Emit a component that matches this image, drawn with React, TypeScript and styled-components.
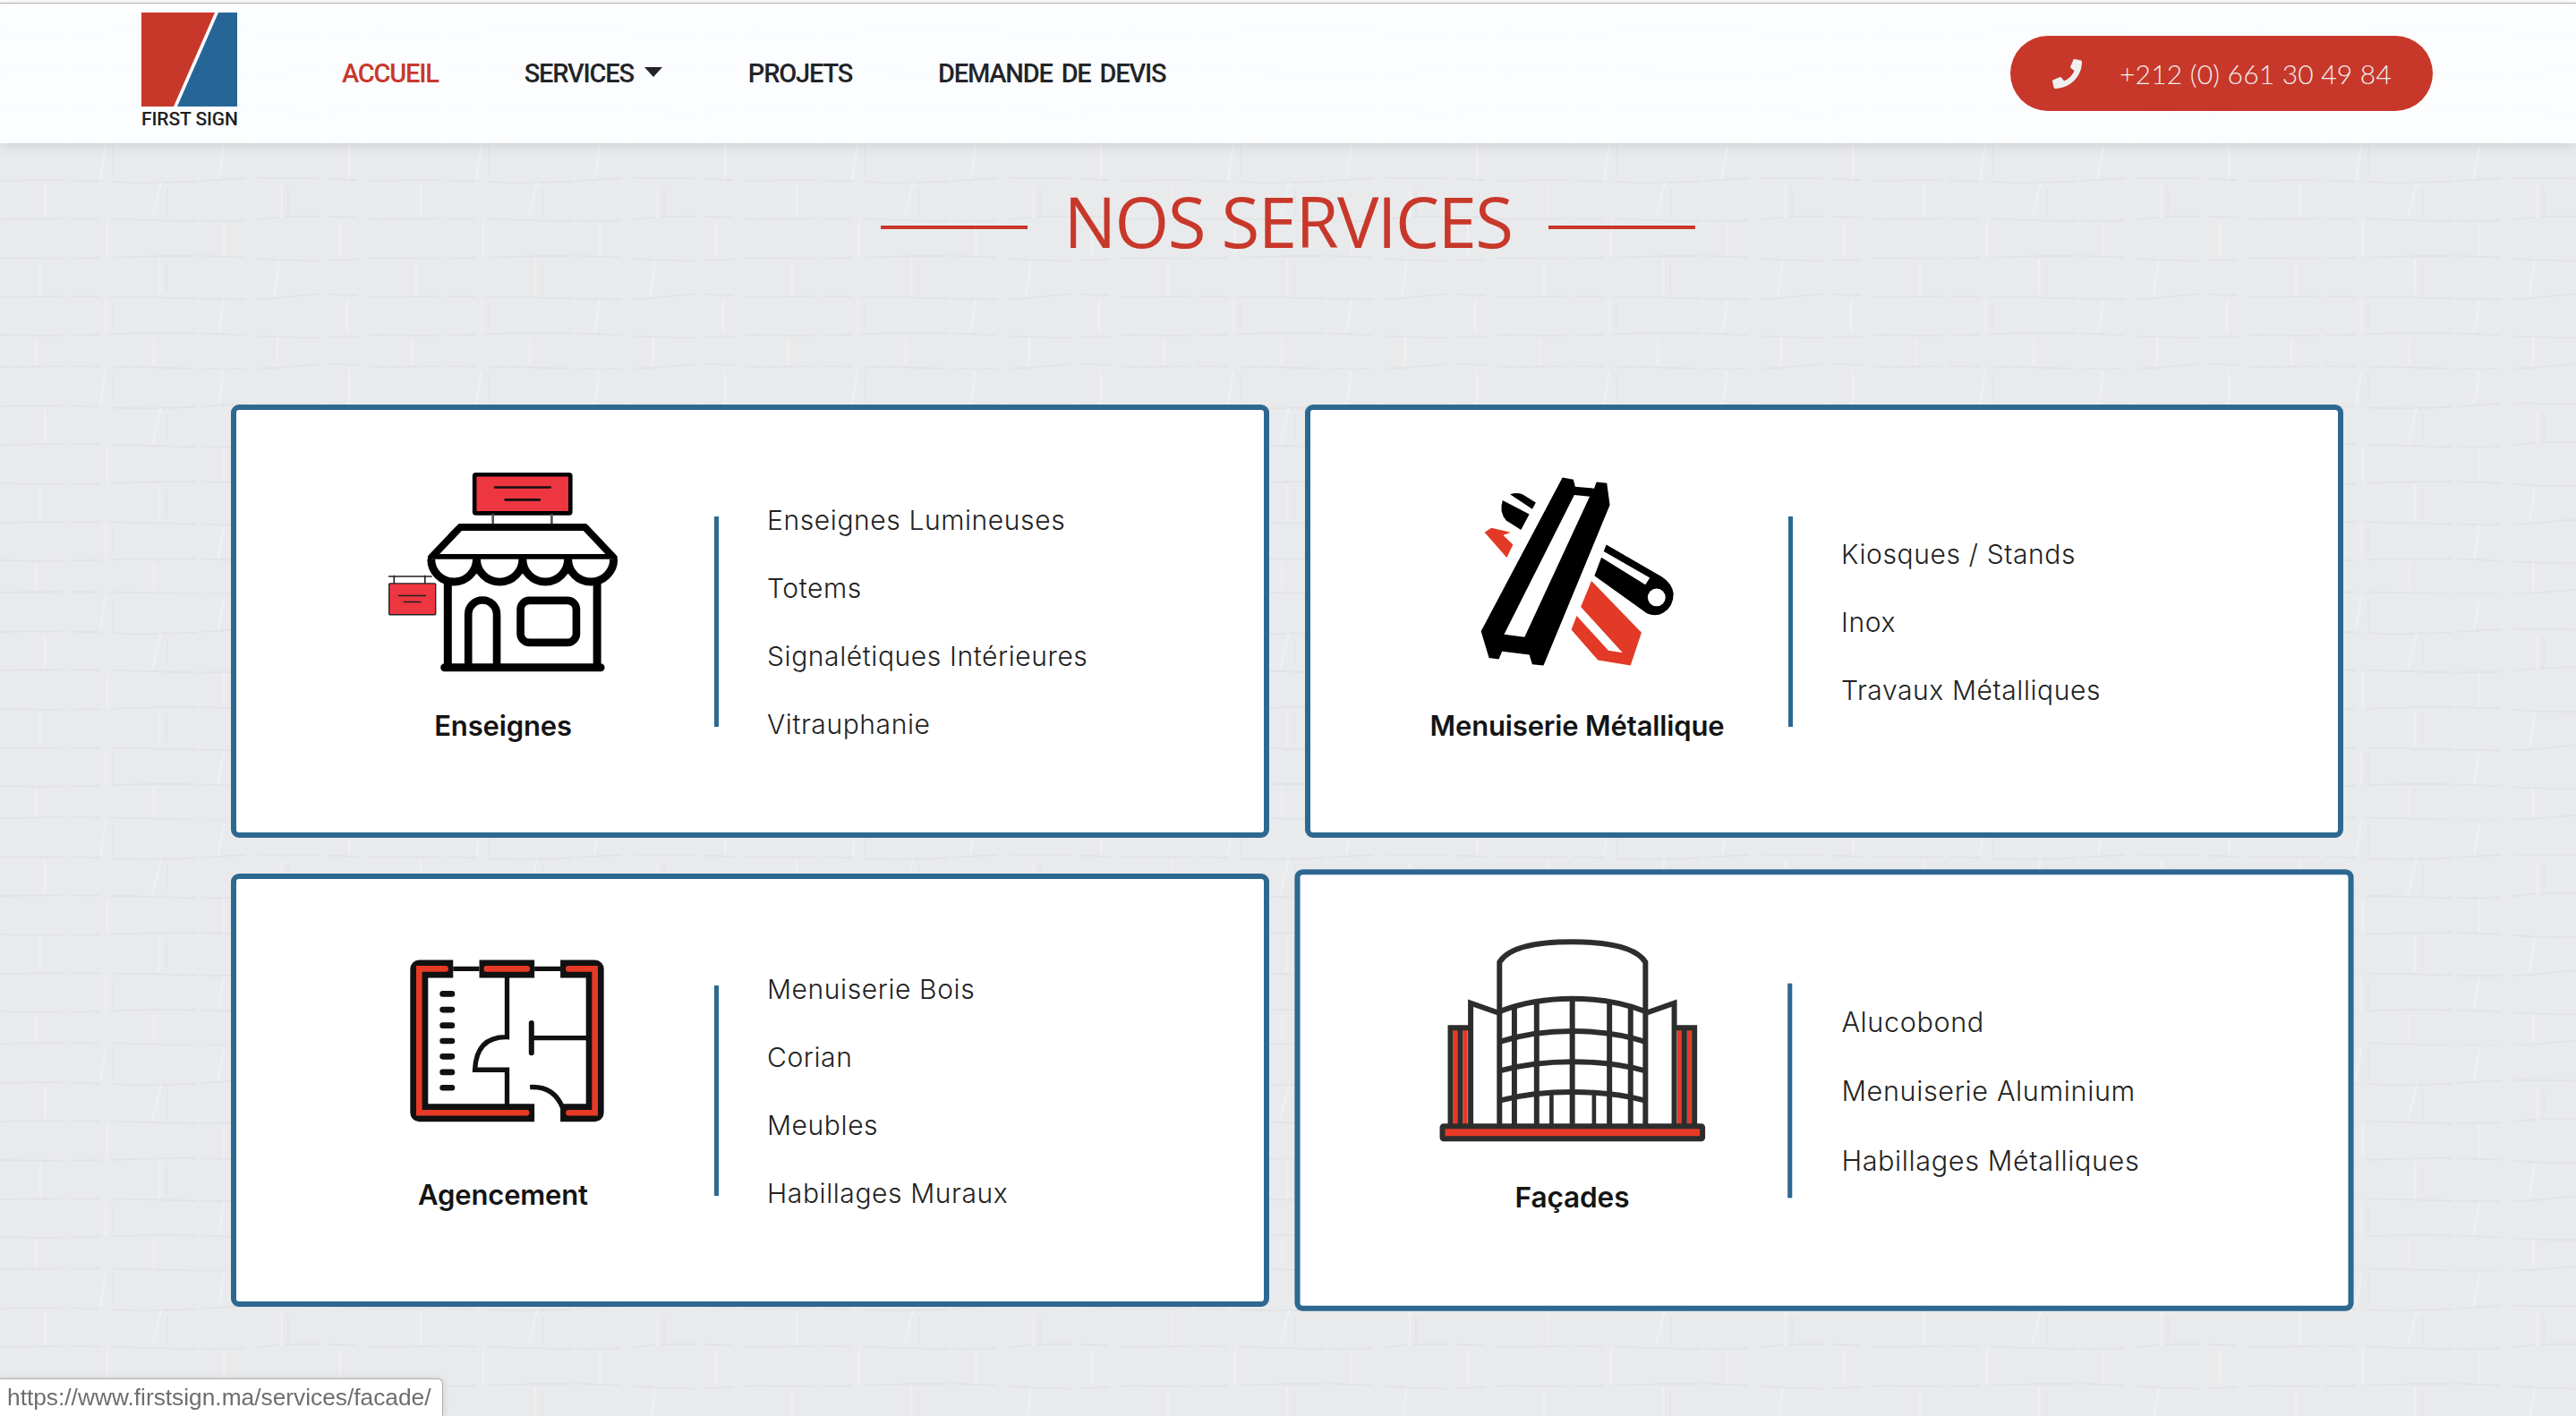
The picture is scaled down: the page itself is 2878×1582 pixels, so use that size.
import React from "react";
import styled, { createGlobalStyle } from "styled-components";
import { FaPhone } from "react-icons/fa";

const brickTile = encodeURIComponent(`<svg xmlns="http://www.w3.org/2000/svg" width="420" height="252" viewBox="0 0 420 252"><defs><filter id="b"><feGaussianBlur stdDeviation="0.7"/></filter></defs><g fill="none" filter="url(#b)"><g stroke="#e2e3e5" stroke-width="2" stroke-dasharray="70 8 34 12 96 6 48 14"><path d="M0 42 Q60 40 120 43 T240 41 T420 42"/><path d="M0 85 Q80 83 170 86 T300 84 T420 85"/><path d="M0 128 Q70 130 150 127 T290 129 T420 128"/><path d="M0 172 Q100 170 200 173 T330 171 T420 172"/><path d="M0 214 Q60 216 130 213 T280 215 T420 214"/><path d="M0 250 Q90 248 190 251 T330 249 T420 250"/></g><g stroke="#eeeff0" stroke-width="3"><path d="M118 2 L112 40"/><path d="M250 4 L244 40"/><path d="M390 2 V40"/><path d="M50 45 V83"/><path d="M180 44 L170 84"/><path d="M315 46 V84"/><path d="M120 88 V126"/><path d="M250 88 V126"/><path d="M380 88 V126"/><path d="M45 131 V170"/><path d="M178 130 V170"/><path d="M312 132 L306 170"/><path d="M118 175 V212"/><path d="M250 175 L244 212"/><path d="M388 175 V212"/><path d="M40 217 V248"/><path d="M172 217 V248"/><path d="M310 217 V248"/></g><g stroke="#e4e5e7" stroke-width="2"><path d="M126 4 V38"/><path d="M187 50 V80"/><path d="M322 50 V82"/><path d="M186 135 V166"/><path d="M126 180 V208"/></g></g></svg>`);

const GlobalStyle = createGlobalStyle`
  html, body { margin: 0; padding: 0; height: 100%; }
  body {
    overflow: hidden;
    background-color: #e9eaec;
    background-image: url("data:image/svg+xml,${brickTile}");
    background-position: 0 160px;
    font-family: "Inter", "Noto Sans", sans-serif;
  }
  * { box-sizing: border-box; }
`;

const Page = styled.div`
  width: 2878px;
  height: 1582px;
  display: flex;
  flex-direction: column;
`;

const TopStrip = styled.div`
  height: 4px;
  background: #fcfdff;
  border-bottom: 1px solid #b5b5b5;
`;

const Header = styled.header`
  height: 156px;
  padding: 10px 160px 0 158px;
  display: flex;
  align-items: flex-start;
  justify-content: space-between;
  background: rgba(252, 253, 255, 0.97);
  box-shadow: 0 2px 14px rgba(0, 0, 0, 0.12);
  position: relative;
`;

const Left = styled.div`
  display: flex;
  align-items: flex-start;
`;

const Logo = styled.a`
  display: flex;
  flex-direction: column;
  width: 107px;
`;

const LogoMark = styled.svg`
  width: 107px;
  height: 105px;
  display: block;
`;

const LogoText = styled.span`
  font-family: "Roboto", sans-serif;
  font-weight: 500;
  font-size: 21px;
  line-height: 22px;
  margin-top: 3px;
  color: #1f1f1f;
  white-space: nowrap;
  letter-spacing: -0.1px;
`;

const Nav = styled.nav`
  display: flex;
  align-items: center;
  gap: 96px;
  margin-left: 117px;
  height: 136px;
`;

const NavItem = styled.a<{ $active?: boolean }>`
  display: flex;
  align-items: center;
  gap: 12px;
  font-family: "Roboto", sans-serif;
  font-weight: 500;
  font-size: 29px;
  line-height: 36px;
  letter-spacing: -1.2px;
  word-spacing: 4px;
  color: ${(p) => (p.$active ? "#c8382a" : "#222428")};
  white-space: nowrap;
`;

const Caret = styled.span`
  width: 0;
  height: 0;
  margin-bottom: 3px;
  border-left: 10px solid transparent;
  border-right: 10px solid transparent;
  border-top: 11px solid #222428;
`;

const PhoneButton = styled.a`
  margin-top: 26px;
  width: 472px;
  height: 84px;
  border-radius: 42px;
  background: #c8382a;
  color: #f0f0f0;
  display: flex;
  align-items: center;
  padding-left: 47px;
  gap: 42px;
  font-family: "Lato", sans-serif;
  font-weight: 300;
  font-size: 30px;
  letter-spacing: 0.2px;
  white-space: nowrap;
`;

const PhoneIcon = styled(FaPhone)`
  width: 33px;
  height: 33px;
  flex: none;
`;

const Main = styled.main`
  padding: 38px 0 0 258px;
`;

const TitleRow = styled.div`
  display: flex;
  justify-content: center;
  align-items: center;
  gap: 40px;
  width: 2362px;
  height: 100px;
  margin-bottom: 154px;
`;

const TitleRule = styled.span`
  width: 164px;
  height: 4px;
  background: #c8382a;
  margin-top: 12px;
`;

const Title = styled.h1`
  margin: -2px 0 0;
  font-family: "Open Sans", sans-serif;
  font-weight: 400;
  font-size: 78px;
  line-height: 100px;
  letter-spacing: -1.6px;
  color: #c8382a;
  white-space: nowrap;
`;

const Grid = styled.div`
  display: grid;
  grid-template-columns: 1160px 1160px;
  grid-auto-rows: 484px;
  column-gap: 40px;
  row-gap: 40px;
`;

const Card = styled.article<{ $hover?: boolean }>`
  background: #fff;
  border: 6px solid #2d6891;
  border-radius: 9px;
  display: flex;
  align-items: center;
  transform: ${(p) => (p.$hover ? "scale(1.02)" : "none")};
`;

const Feature = styled.div`
  width: 534px;
  padding-left: 62px;
  margin-bottom: 36px;
  display: flex;
  flex-direction: column;
  align-items: center;
  flex: none;
`;

const IconBox = styled.div`
  height: 236px;
  display: flex;
  align-items: center;
  justify-content: center;
`;

const FeatureName = styled.h2`
  margin: 34px 0 0;
  font-family: "Inter", sans-serif;
  font-weight: 600;
  font-size: 31px;
  line-height: 40px;
  letter-spacing: -0.15px;
  color: #141414;
  white-space: nowrap;
`;

const Divider = styled.span`
  width: 5px;
  height: 235px;
  background: #2d6891;
  flex: none;
`;

const Items = styled.ul`
  list-style: none;
  margin: 0;
  padding: 2px 0 0 54px;
  display: flex;
  flex-direction: column;
  gap: 36px;
`;

const Item = styled.li`
  font-family: "Inter", sans-serif;
  font-weight: 300;
  font-size: 30px;
  line-height: 40px;
  letter-spacing: 0.6px;
  color: #222;
  white-space: nowrap;
`;

const StatusBar = styled.div`
  position: fixed;
  left: 0;
  bottom: 0;
  width: 495px;
  height: 42px;
  padding-left: 8px;
  display: flex;
  align-items: center;
  background: #fff;
  border: 1px solid #adadad;
  border-left: 0;
  border-bottom: 0;
  border-top-right-radius: 6px;
  box-shadow: 0 0 8px rgba(0, 0, 0, 0.12);
  font-family: "Liberation Sans", sans-serif;
  font-size: 26.3px;
  color: #6e6e6e;
  white-space: nowrap;
`;

const ShopIcon = () => (
  <svg width={258} height={224} viewBox="100 76 778 674" aria-hidden="true">
    <rect x="393" y="85" width="323" height="130" rx="4" fill="#ee3640" stroke="#000" strokeWidth="14" />
    <path d="M462 128H648M497 170H612" stroke="#111" strokeWidth="8" strokeLinecap="round" />
    <path d="M455 218V255M653 218V255" stroke="#555" strokeWidth="8" />
    <path d="M345 262H765L862 365H247Z" fill="#fff" stroke="#000" strokeWidth="24" strokeLinejoin="round" />
    <path d="M303 450V735M806 450V735M292 735H818" fill="none" stroke="#000" strokeWidth="27" strokeLinecap="round" />
    <path d="M247 370A76.5 76 0 0 0 400 370A77 76 0 0 0 555 370A76.5 76 0 0 0 708 370A77 76 0 0 0 862 370" fill="#fff" stroke="#000" strokeWidth="27" strokeLinejoin="round" />
    <path d="M372 725V556A48 48 0 0 1 468 556V725" fill="none" stroke="#000" strokeWidth="26" />
    <rect x="548" y="509" width="188" height="142" rx="30" fill="none" stroke="#000" strokeWidth="26" />
    <path d="M103 428H250M122 424V452M226 424V452" stroke="#222" strokeWidth="5" />
    <rect x="105" y="452" width="157" height="105" rx="3" fill="#ee3640" stroke="#222" strokeWidth="4" />
    <path d="M135 493H230M153 514H213" stroke="#222" strokeWidth="4" />
  </svg>
);

const MetalIcon = () => (
  <svg width={217} height={214} viewBox="103 72 656 640" aria-hidden="true">
    <path fillRule="evenodd" d="M380 73L417 80L423 104L487 110L495 88L530 92L540 166L316 708L278 704L268 672L176 660L165 687L132 682L105 592ZM420 132L472 137L252 612L183 603Z" fill="#000" />
    <path d="M178 150L268 197L240 250L190 218Q165 190 178 150Z" fill="#000" />
    <path d="M203 130Q225 122 245 130L290 158L278 180Z" fill="#000" />
    <path d="M117 258L140 243L205 258L180 268L213 300L192 344Z" fill="#e23a26" />
    <path d="M528 300L715 408Q750 430 755 465Q755 510 720 530Q695 545 665 532L488 405Z" fill="#000" />
    <path d="M518 322L675 412L660 435L510 342Z" fill="#fff" />
    <circle cx="698" cy="478" r="30" fill="#fff" />
    <path d="M478 422L647 597L610 708L500 690L410 587L428 540L535 657L583 665L442 510Z" fill="#e23a26" />
  </svg>
);

const PlanIcon = () => (
  <svg width={226} height={184} viewBox="60 89 679 552" aria-hidden="true">
    <g fill="none" stroke="#111">
      <path d="M232 123H118V606H505M320 123H505M592 123H708V606H592" strokeWidth="60" strokeLinejoin="round" />
      <path d="M232 123H320M505 123H592M413 150V352Q310 350 305 462H413V580M490 520Q570 515 600 590M495 355H680" strokeWidth="16" />
      <path d="M495 305V405" strokeWidth="18" strokeLinecap="round" />
      <path d="M197 207H228M197 260H228M197 313H228M197 365H228M197 417H228M197 470H228M197 522H228" strokeWidth="20" strokeLinecap="round" />
    </g>
    <path d="M206 123H118V606H478M345 123H480M620 123H708V606H620" fill="none" stroke="#e63a26" strokeWidth="20" strokeLinecap="round" />
  </svg>
);

const FacadeIcon = () => (
  <svg width={293} height={224} viewBox="84 78 898 688" aria-hidden="true">
    <rect x="131" y="388" width="16" height="320" fill="#e63a26" />
    <rect x="164" y="388" width="16" height="320" fill="#e63a26" />
    <rect x="885" y="388" width="16" height="320" fill="#e63a26" />
    <rect x="918" y="388" width="16" height="320" fill="#e63a26" />
    <g fill="none" stroke="#2d2d2d" strokeWidth="18">
      <path d="M190 381H122V712M155 381V712M876 381H943V712M909 381V712" />
      <path d="M190 712V298L287 332M875 712V298L778 332" />
      <path d="M287 712V160Q330 92 532 92Q735 92 778 160V712" />
      <path d="M290 325Q400 283 532 283Q665 283 775 325" />
      <path d="M290 427Q400 392 532 392Q665 392 775 427" />
      <path d="M290 525Q400 495 532 495Q665 495 775 525" />
      <path d="M290 625Q400 597 532 597Q665 597 775 625" />
      <path d="M337 315V712M412 298V712M532 283V712M657 298V712M728 315V712" />
      <path d="M462 600V712M605 600V712" strokeWidth="14" />
    </g>
    <rect x="95" y="712" width="875" height="42" rx="4" fill="#e63a26" stroke="#2d2d2d" strokeWidth="18" />
  </svg>
);

const services = [
  { name: "Enseignes", Icon: ShopIcon, items: ["Enseignes Lumineuses", "Totems", "Signalétiques Intérieures", "Vitrauphanie"] },
  { name: "Menuiserie Métallique", Icon: MetalIcon, items: ["Kiosques / Stands", "Inox", "Travaux Métalliques"] },
  { name: "Agencement", Icon: PlanIcon, items: ["Menuiserie Bois", "Corian", "Meubles", "Habillages Muraux"] },
  { name: "Façades", Icon: FacadeIcon, items: ["Alucobond", "Menuiserie Aluminium", "Habillages Métalliques"], hover: true },
];

export default function App() {
  return (
    <Page>
      <GlobalStyle />
      <TopStrip />
      <Header>
        <Left>
          <Logo>
            <LogoMark viewBox="0 0 107 105" aria-hidden="true">
              <polygon points="0,0 82,0 36,105 0,105" fill="#c8382a" />
              <polygon points="86,0 107,0 107,105 40,105" fill="#266697" />
            </LogoMark>
            <LogoText>FIRST SIGN</LogoText>
          </Logo>
          <Nav>
            <NavItem $active>ACCUEIL</NavItem>
            <NavItem>SERVICES<Caret /></NavItem>
            <NavItem>PROJETS</NavItem>
            <NavItem>DEMANDE DE DEVIS</NavItem>
          </Nav>
        </Left>
        <PhoneButton>
          <PhoneIcon />
          +212 (0) 661 30 49 84
        </PhoneButton>
      </Header>
      <Main>
        <TitleRow>
          <TitleRule />
          <Title>NOS SERVICES</Title>
          <TitleRule />
        </TitleRow>
        <Grid>
          {services.map(({ name, Icon, items, hover }) => (
            <Card key={name} $hover={hover}>
              <Feature>
                <IconBox><Icon /></IconBox>
                <FeatureName>{name}</FeatureName>
              </Feature>
              <Divider />
              <Items>
                {items.map((item) => <Item key={item}>{item}</Item>)}
              </Items>
            </Card>
          ))}
        </Grid>
      </Main>
      <StatusBar>https://www.firstsign.ma/services/facade/</StatusBar>
    </Page>
  );
}
